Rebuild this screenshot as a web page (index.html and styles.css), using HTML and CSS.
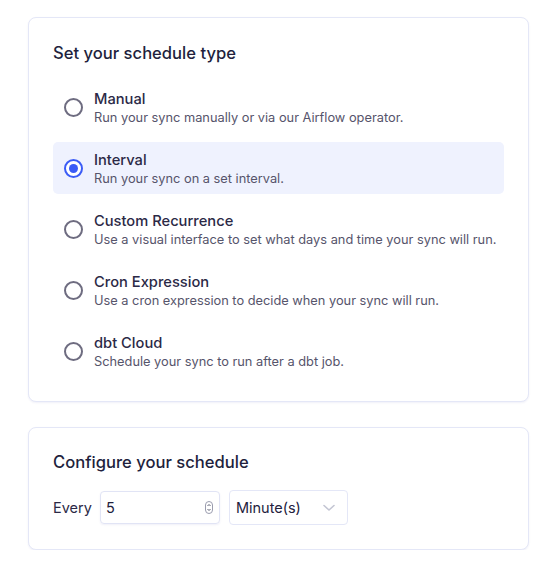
FILE: index.html
```html
<!DOCTYPE html>
<html>
<head>
<meta charset="utf-8">
<link rel="stylesheet" href="styles.css">
</head>
<body>
<div class="page">
  <section class="card">
    <h2 class="card-title">Set your schedule type</h2>
    <div class="options">
      <div class="option">
        <span class="radio"></span>
        <div class="option-text">
          <div class="option-title">Manual</div>
          <div class="option-desc">Run your sync manually or via our Airflow operator.</div>
        </div>
      </div>
      <div class="option selected">
        <span class="radio"></span>
        <div class="option-text">
          <div class="option-title">Interval</div>
          <div class="option-desc">Run your sync on a set interval.</div>
        </div>
      </div>
      <div class="option">
        <span class="radio"></span>
        <div class="option-text">
          <div class="option-title">Custom Recurrence</div>
          <div class="option-desc">Use a visual interface to set what days and time your sync will run.</div>
        </div>
      </div>
      <div class="option">
        <span class="radio"></span>
        <div class="option-text">
          <div class="option-title">Cron Expression</div>
          <div class="option-desc">Use a cron expression to decide when your sync will run.</div>
        </div>
      </div>
      <div class="option">
        <span class="radio"></span>
        <div class="option-text">
          <div class="option-title">dbt Cloud</div>
          <div class="option-desc">Schedule your sync to run after a dbt job.</div>
        </div>
      </div>
    </div>
  </section>

  <section class="card card-config">
    <h2 class="card-title">Configure your schedule</h2>
    <div class="config-row">
      <span class="every">Every</span>
      <div class="number-input">
        <span class="value">5</span>
        <svg class="spinner" width="8" height="13" viewBox="0 0 8 13">
          <rect x="0.5" y="0.5" width="7" height="12" rx="3.5" fill="none" stroke="#9a9cae" stroke-width="1"/>
          <path d="M2.5 5 L4 3.5 L5.5 5" fill="none" stroke="#5c5e72" stroke-width="1"/>
          <path d="M2.5 8 L4 9.5 L5.5 8" fill="none" stroke="#5c5e72" stroke-width="1"/>
        </svg>
      </div>
      <div class="select">
        <span class="value">Minute(s)</span>
        <svg class="chevron" width="12" height="8" viewBox="0 0 12 8">
          <path d="M1 1.5 L6 6 L11 1.5" fill="none" stroke="#c3c5d3" stroke-width="1.6" stroke-linecap="round" stroke-linejoin="round"/>
        </svg>
      </div>
    </div>
  </section>
</div>
</body>
</html>
```

FILE: styles.css
```css
* { box-sizing: border-box; }
html, body { margin: 0; padding: 0; background: #ffffff; }
body {
  font-family: Inter, "Noto Sans", sans-serif;
  color: #23213d;
}
.page {
  padding: 17px 26px 0 28px;
  display: flex;
  flex-direction: column;
  gap: 25px;
}
.card {
  border: 1px solid #e4e7f7;
  border-radius: 8px;
  padding: 24px;
  box-shadow: 0 1px 2px rgba(60, 70, 160, 0.08);
  background: #fff;
}
.card-title {
  margin: 0;
  font-size: 16.6px;
  line-height: 22px;
  font-weight: 500;
  color: #221f3d;
}
.options {
  margin-top: 17px;
  display: flex;
  flex-direction: column;
  gap: 9px;
}
.option {
  display: flex;
  align-items: center;
  gap: 11px;
  padding: 7px 11px;
  border-radius: 5px;
  height: 52px;
}
.option.selected { background: #eff2fe; }
.radio {
  flex: none;
  width: 19px;
  height: 19px;
  border-radius: 50%;
  border: 2px solid #6e6c80;
  background: #fff;
  position: relative;
}
.selected .radio {
  border-color: #3b5cf6;
  border-width: 2.5px;
}
.selected .radio::after {
  content: "";
  position: absolute;
  left: 50%;
  top: 50%;
  width: 9px;
  height: 9px;
  margin: -4.5px 0 0 -4.5px;
  border-radius: 50%;
  background: #3b5cf6;
}
.option-text {
  display: flex;
  flex-direction: column;
  padding-top: 2px;
  white-space: nowrap;
}
.option-title {
  font-size: 14.7px;
  line-height: 20px;
  font-weight: 500;
  color: #2b2946;
}
.option-desc {
  font-size: 12.8px;
  line-height: 18px;
  color: #56546b;
}
.card-config .card-title { line-height: 20px; }
.config-row {
  margin-top: 18px;
  display: flex;
  align-items: center;
  height: 35px;
}
.every {
  font-size: 14.5px;
  color: #2b2946;
  margin-right: 8px;
}
.number-input {
  width: 120px;
  height: 33px;
  border: 1px solid #e1e4f5;
  border-radius: 4px;
  display: flex;
  align-items: center;
  justify-content: space-between;
  padding: 0 6px 0 5px;
  box-shadow: 0 1px 2px rgba(60, 70, 160, 0.08);
}
.value { font-size: 14.5px; color: #23213d; }
.spinner { display: block; }
.select {
  margin-left: 9px;
  width: 119px;
  height: 35px;
  border: 1px solid #e4e7f7;
  border-radius: 4px;
  display: flex;
  align-items: center;
  justify-content: space-between;
  padding: 0 12px 0 6px;
}
.chevron { display: block; }
```
